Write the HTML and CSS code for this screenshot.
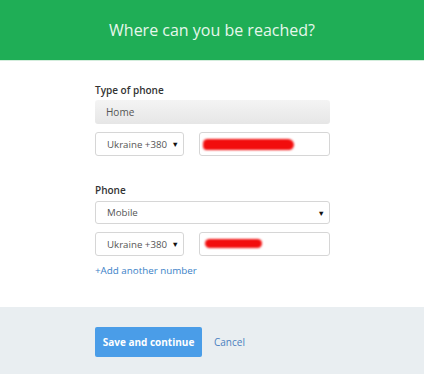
FILE: index.html
```html
<!DOCTYPE html>
<html>
<head>
<meta charset="utf-8">
<link rel="stylesheet" href="styles.css">
</head>
<body>
<div class="header">Where can you be reached?</div>
<div class="content">
  <div class="label">Type of phone</div>
  <div class="home">Home</div>
  <div class="row">
    <div class="select country">Ukraine +380<span class="caret">▼</span></div>
    <div class="input"><span class="scribble s1"></span></div>
  </div>
  <div class="label label2">Phone</div>
  <div class="select full">Mobile<span class="caret">▼</span></div>
  <div class="row">
    <div class="select country">Ukraine +380<span class="caret">▼</span></div>
    <div class="input"><span class="scribble s2"></span></div>
  </div>
  <a class="add">+Add another number</a>
</div>
<div class="footer">
  <button class="save">Save and continue</button>
  <a class="cancel">Cancel</a>
</div>
</body>
</html>
```
FILE: styles.css
```css
html, body { margin: 0; padding: 0; background: #fff; }
body { font-family: "Open Sans", sans-serif; width: 424px; height: 374px; overflow: hidden; }
.header {
  height: 60px; background: #1fae56; color: #e6f7ec;
  font-size: 16px; font-weight: 400; display: flex; align-items: center; justify-content: center;
  border-bottom: 1px solid #d3eddc;
}
.content { padding: 22px 94px 0 95px; height: 246px; box-sizing: border-box; }
.label { font-size: 10px; color: #333; font-weight: 600; line-height: 14px; height: 17px; }
.label2 { margin-top: 27px; height: 18px; }
.home {
  height: 24px; width: 235px; box-sizing: border-box; border-radius: 3px;
  background: linear-gradient(#f4f4f4, #e6e6e6); font-size: 10px; color: #555;
  display: flex; align-items: center; padding-left: 11px;
}
.row { display: flex; gap: 15px; margin-top: 8px; }
.select {
  height: 24px; box-sizing: border-box; border: 1px solid #d6d6d6; border-radius: 3px;
  font-size: 9.7px; color: #555; display: flex; align-items: center; padding-left: 11px;
  position: relative; background: #fff;
}
.caret { position: absolute; right: 4px; font-size: 7.5px; color: #111; top: 6px; }
.country { width: 89px; }
.full { width: 235px; height: 23px; }
.input { width: 131px; height: 24px; box-sizing: border-box; border: 1px solid #d6d6d6; border-radius: 3px; position: relative; background: #fff; }
.scribble { position: absolute; background: #f20d0d; border-radius: 8px; filter: blur(1.2px); }
.s1 { left: 3px; top: 6px; width: 91px; height: 11px; border-radius: 6px 8px 7px 5px; }
.s2 { left: 5px; top: 6px; width: 57px; height: 9px; }
.add { display: block; margin-top: 8px; font-size: 9.8px; color: #3a7fc7; line-height: 14px; }
.footer { background: #e9eef1; height: 67px; padding: 20px 0 0 95px; box-sizing: border-box; display: flex; align-items: flex-start; gap: 12px; }
.save {
  height: 30px; width: 107px; background: #4a9de8; color: #fff; border: none; border-radius: 2px;
  font-family: "Open Sans", sans-serif; font-weight: 700; font-size: 10px; padding: 0;
}
.cancel { font-size: 10px; color: #4a7fc0; line-height: 30px; }
```
